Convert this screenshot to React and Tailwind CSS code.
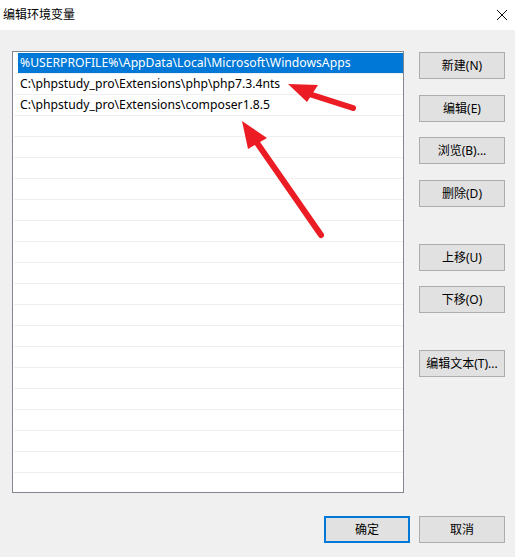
import React from "react";

const paths = [
  "%USERPROFILE%\\AppData\\Local\\Microsoft\\WindowsApps",
  "C:\\phpstudy_pro\\Extensions\\php\\php7.3.4nts",
  "C:\\phpstudy_pro\\Extensions\\composer1.8.5",
];

const font = { fontFamily: '"Noto Sans", "Noto Sans CJK SC", sans-serif' };

function Btn({ children, primary, className = "" }) {
  return (
    <div
      className={
        "w-[86px] h-[27px] flex items-center justify-center bg-[#e1e1e1] text-[12px] text-black " +
        (primary ? "border-2 border-[#0078d7] " : "border border-[#adadad] ") +
        className
      }
    >
      {children}
    </div>
  );
}

export default function App() {
  const rows = [...paths, ...Array(18).fill("")];

  return (
    <div className="relative w-[515px] h-[557px] bg-[#f0f0f0] flex flex-col overflow-hidden" style={font}>
      {/* 标题栏 */}
      <div className="h-[30px] bg-white flex items-center justify-between pl-[3px] pr-[6px]">
        <span className="text-[12px] text-black pb-[1px]">编辑环境变量</span>
        <svg width="12" height="12" viewBox="0 0 12 12" className="mr-[1px]">
          <path d="M1 1 L11 11 M11 1 L1 11" stroke="#111" strokeWidth="1" />
        </svg>
      </div>

      <div className="flex pt-[21px] pl-[12px]">
        {/* 列表 */}
        <div className="w-[392px] h-[442px] border border-[#828790] bg-white pt-[1px] pl-[1px] overflow-hidden">
          {rows.map((p, i) => (
            <div key={i} className="h-[21px] border-b border-[#efefef]">
              {i === 0 ? (
                <div className="ml-[4px] h-[20px] bg-[#0078d7] text-white text-[12.2px] leading-[20px] pl-[2px]">{p}</div>
              ) : (
                <div className="ml-[4px] h-[20px] text-black text-[12.2px] leading-[20px] pl-[2px]">{p}</div>
              )}
            </div>
          ))}
        </div>

        {/* 右侧按钮 */}
        <div className="ml-[15px] pt-[1px] flex flex-col">
          <Btn>新建(N)</Btn>
          <Btn className="mt-[16px]">编辑(E)</Btn>
          <Btn className="mt-[15px]">浏览(B)...</Btn>
          <Btn className="mt-[16px]">删除(D)</Btn>
          <Btn className="mt-[37px]">上移(U)</Btn>
          <Btn className="mt-[15px]">下移(O)</Btn>
          <Btn className="mt-[37px]">编辑文本(T)...</Btn>
        </div>
      </div>

      {/* 底部按钮 */}
      <div className="flex justify-end gap-[9px] pr-[10px] mt-[23px]">
        <Btn primary>确定</Btn>
        <Btn>取消</Btn>
      </div>

      {/* 红色标注箭头 */}
      <svg className="absolute left-0 top-0 pointer-events-none" width="515" height="557">
        <line x1="306" y1="93" x2="353" y2="108" stroke="#ec1c24" strokeWidth="6" strokeLinecap="round" />
        <polygon points="288,84 318,85 307,102" fill="#ec1c24" />
        <line x1="255" y1="140" x2="321" y2="235" stroke="#ec1c24" strokeWidth="6" strokeLinecap="round" />
        <polygon points="242,121 267,138 248,149" fill="#ec1c24" />
      </svg>
    </div>
  );
}
